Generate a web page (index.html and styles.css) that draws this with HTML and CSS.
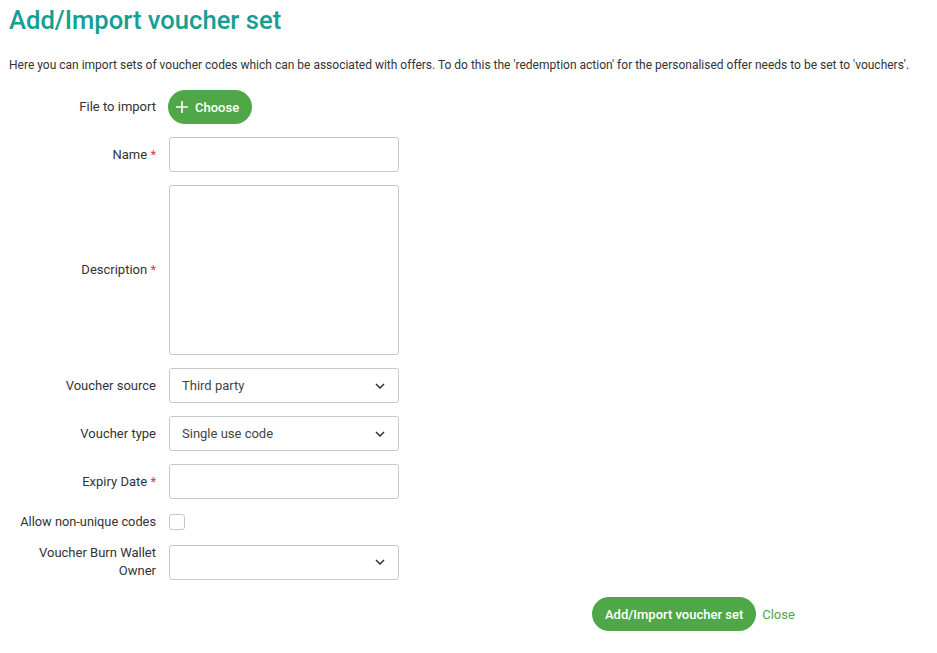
FILE: index.html
```html
<!DOCTYPE html>
<html>
<head>
<meta charset="utf-8">
<link rel="stylesheet" href="styles.css">
</head>
<body>
<h1 class="title">Add/Import voucher set</h1>
<p class="intro">Here you can import sets of voucher codes which can be associated with offers. To do this the 'redemption action' for the personalised offer needs to be set to 'vouchers'.</p>
<form class="form">
  <div class="row">
    <label class="label">File to import</label>
    <div class="field"><button type="button" class="btn btn-choose"><svg width="14" height="14" viewBox="0 0 14 14"><path d="M7 1v12M1 7h12" stroke="#fff" stroke-width="1.6" fill="none"/></svg><span>Choose</span></button></div>
  </div>
  <div class="row">
    <label class="label">Name <span class="req">*</span></label>
    <div class="field"><div class="input"></div></div>
  </div>
  <div class="row">
    <label class="label">Description <span class="req">*</span></label>
    <div class="field"><div class="input textarea"></div></div>
  </div>
  <div class="row">
    <label class="label">Voucher source</label>
    <div class="field"><div class="input select"><span>Third party</span><svg class="chev" width="10" height="6" viewBox="0 0 10 6"><path d="M1 1l4 4 4-4" stroke="#333" stroke-width="1.5" fill="none"/></svg></div></div>
  </div>
  <div class="row">
    <label class="label">Voucher type</label>
    <div class="field"><div class="input select"><span>Single use code</span><svg class="chev" width="10" height="6" viewBox="0 0 10 6"><path d="M1 1l4 4 4-4" stroke="#333" stroke-width="1.5" fill="none"/></svg></div></div>
  </div>
  <div class="row">
    <label class="label">Expiry Date <span class="req">*</span></label>
    <div class="field"><div class="input"></div></div>
  </div>
  <div class="row row-check">
    <label class="label label-sm">Allow non-unique codes</label>
    <div class="field"><div class="checkbox"></div></div>
  </div>
  <div class="row">
    <label class="label">Voucher Burn Wallet Owner</label>
    <div class="field"><div class="input select"><span></span><svg class="chev" width="10" height="6" viewBox="0 0 10 6"><path d="M1 1l4 4 4-4" stroke="#333" stroke-width="1.5" fill="none"/></svg></div></div>
  </div>
  <div class="actions">
    <button type="button" class="btn btn-submit">Add/Import voucher set</button>
    <a class="close">Close</a>
  </div>
</form>
</body>
</html>
```
FILE: styles.css
```css
body {
  margin: 0;
  padding: 0 9px;
  font-family: Roboto, "Liberation Sans", sans-serif;
  color: #333;
  background: #fff;
}
.title {
  margin: 0;
  padding-top: 4px;
  font-size: 25.6px;
  font-weight: 500;
  color: #169e94;
  line-height: 32px;
}
.intro {
  margin: 21px 0 0;
  font-size: 12px;
  line-height: 16px;
  color: #333;
}
.form {
  margin-top: 17px;
  display: flex;
  flex-direction: column;
  gap: 13px;
}
.row {
  display: flex;
  align-items: center;
}
.label {
  width: 147px;
  text-align: right;
  font-size: 13px;
  line-height: 18px;
  color: #333;
  padding-right: 13px;
}
.label-sm { font-size: 12.8px; }
.req { color: #e0393e; }
.field { width: 230px; }
.input {
  box-sizing: border-box;
  height: 35px;
  border: 1px solid #c8c8c8;
  border-radius: 3px;
  background: #fff;
}
.textarea { height: 170px; }
.select {
  display: flex;
  align-items: center;
  justify-content: space-between;
  padding: 0 13px 0 12px;
  font-size: 13px;
  color: #444;
}
.chev { display: block; }
.checkbox {
  width: 16px;
  height: 16px;
  box-sizing: border-box;
  border: 1px solid #c8c8c8;
  border-radius: 3px;
}
.row-check { margin: 1px 0 0; }
.btn {
  border: 0;
  background: #4fa748;
  color: #fff;
  font-family: Roboto, "Liberation Sans", sans-serif;
  font-weight: 500;
  font-size: 13px;
  height: 34px;
  border-radius: 17px;
  cursor: pointer;
}
.btn-choose {
  display: flex;
  align-items: center;
  gap: 6px;
  padding: 0 13px 0 7px;
  margin-left: -1px;
}
.actions {
  display: flex;
  align-items: center;
  padding-left: 583px;
  margin-top: 4px;
  gap: 6px;
}
.btn-submit { padding: 0 13px; }
.close {
  color: #4fa748;
  font-size: 13px;
}
```
